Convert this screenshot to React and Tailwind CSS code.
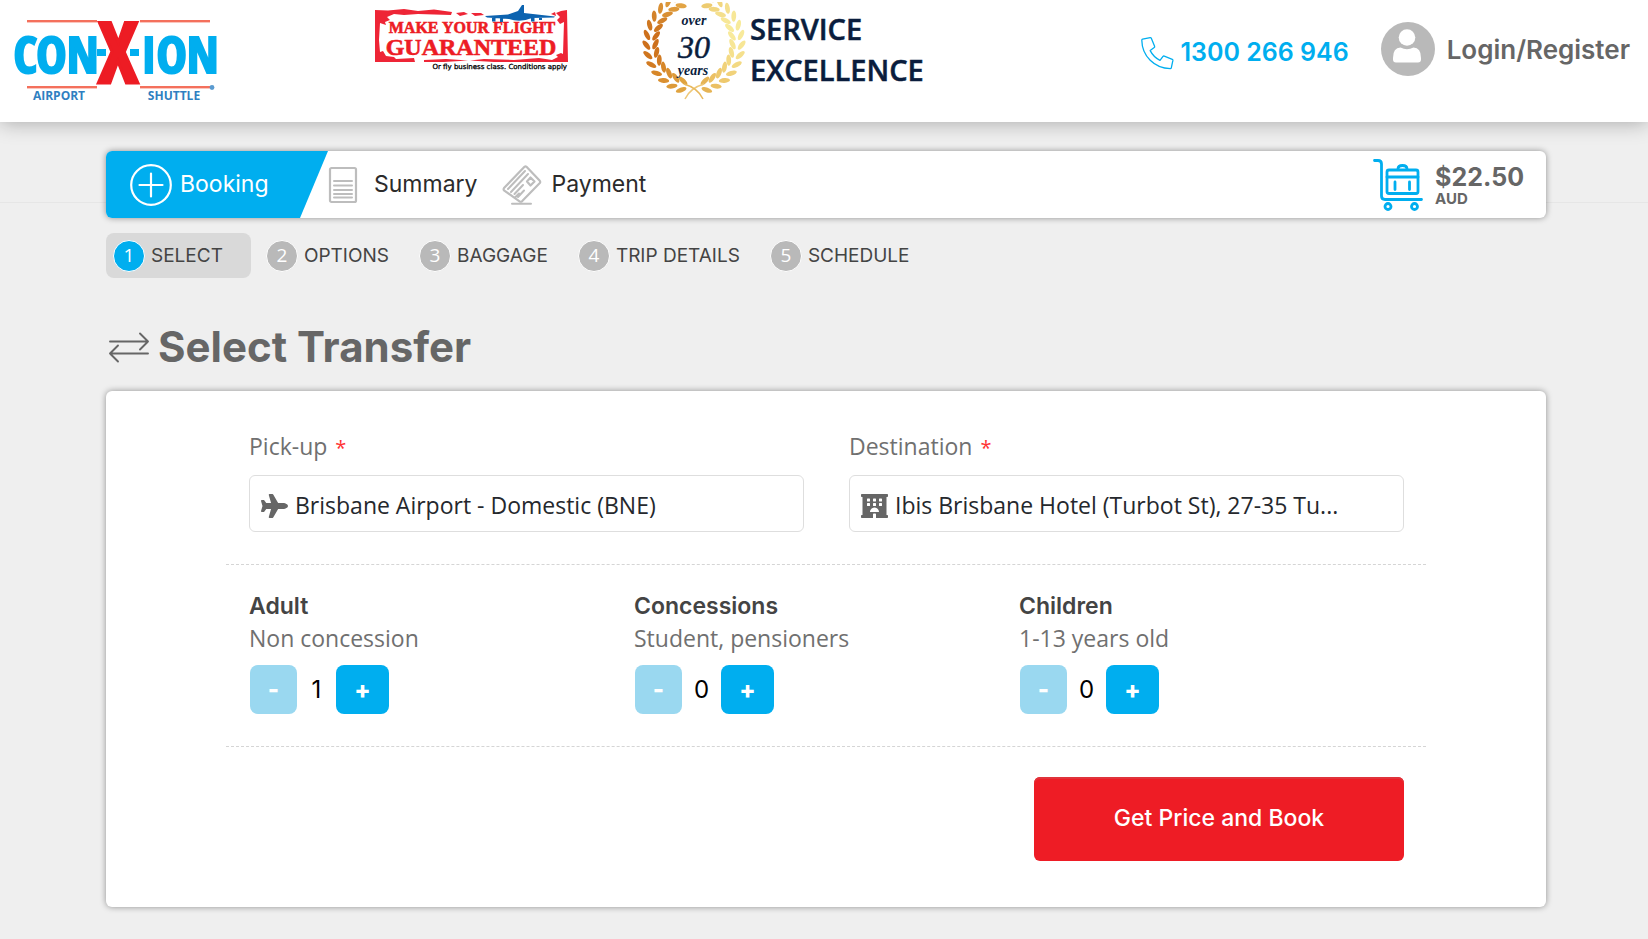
import { useState } from "react";
import { FaHotel, FaPlane } from "react-icons/fa";

const sans = "font-['Inter','Liberation_Sans',sans-serif]";
const body = "font-['Open_Sans','Noto_Sans',sans-serif]";

function ConxionLogo() {
  return (
    <svg viewBox="0 0 206 106" className="h-[106px] w-[206px] overflow-visible" role="img" aria-label="Con-X-ion Airport Shuttle">
      <g fill="#f4705c">
        <rect x="15" y="20" width="70" height="2.4" />
        <rect x="128" y="20" width="70" height="2.4" />
        <rect x="15" y="86" width="70" height="2.4" />
        <rect x="128" y="86" width="70" height="2.4" />
      </g>
      <g fill="#00aeef" stroke="#00aeef" strokeWidth="2" fontFamily="Open Sans Condensed, Liberation Sans Narrow, Liberation Sans, sans-serif" fontWeight="700" fontSize="51" textAnchor="middle">
        <text x="44" y="73">CON</text>
        <text x="168" y="73">ION</text>
      </g>
      <rect x="85" y="49" width="9" height="7" fill="#00aeef" />
      <rect x="118" y="49" width="9" height="7" fill="#00aeef" />
      <text x="106" y="83" fill="#ed1c24" stroke="#ed1c24" strokeWidth="3" fontFamily="Open Sans Condensed, Liberation Sans Narrow, Liberation Sans, sans-serif" fontWeight="700" fontSize="84" textAnchor="middle">X</text>
      <g fill="#2f7fc1" fontFamily="Open Sans, sans-serif" fontWeight="700" fontSize="12" textAnchor="middle">
        <text x="47" y="100">AIRPORT</text>
        <text x="162" y="100">SHUTTLE</text>
      </g>
      <circle cx="200" cy="87.500" r="2.400" fill="#5a9bd0" />
    </svg>
  );
}

function GuaranteeStamp() {
  return (
    <svg viewBox="0 0 200 76" className="h-[76px] w-[200px]" role="img" aria-label="Make your flight guaranteed">
      <g fill="#ee2536">
        <path d="M1 10 L14 10.500 L30 9 L44 11 L60 9.500 L78 12 L77 15 L60 14.500 L44 14 L30 15 L20 14 L13 17 L16 20 L11 22 L12 25 L6 23 L5 40 L6 52 L9 51 L12 56 L20 57 L22 59 L40 58 L41 62 L1 62Z" />
        <path d="M193 10 L194 62 L120 62 L96 60.500 L110 59 L140 60 L165 58 L178 60 L184 57 L182 55 L187 53 L189 54 L190 22 L186 24 L183 20 L186 17 L182 13 L187 11Z" />
        <path d="M50 60 L72 59 L94 60.500 L70 62 L50 62Z" />
        <path d="M82 13 l8 -1 l4 2 l-8 2z M97 13 l10 0 l3 2 l-9 1z M177 14 l4 -2 l1 4z" />
      </g>
      <g fill="#ed1c24" fontFamily="Liberation Serif, serif" fontWeight="700" textAnchor="middle" stroke="#ed1c24" strokeWidth="0.600">
        <text x="98" y="33" fontSize="16">MAKE YOUR FLIGHT</text>
        <text x="97" y="55" fontSize="24">GUARANTEED</text>
      </g>
      <path d="M111 16 L134 14.500 L144 11 L148 5 L150 5 L150 13 L181 16.500 L180 17.500 L158 18 Q146 23 135 19 L113 17.500Z M118 17h3.500v4.500h-3.500z M126 18h3v4h-3z M157 17h3.500v4.500h-3.500z M165 16h3v4h-3z" fill="#0c63b0" />
      <text x="193" y="69" textAnchor="end" fill="#000" stroke="#000" strokeWidth="0.300" fontFamily="DejaVu Sans, sans-serif" fontSize="7">Or fly business class. Conditions apply</text>
    </svg>
  );
}

const LEFT_COLOURS = ["#e0a33f", "#dd9a38", "#da9030", "#d78729", "#d27b22", "#cf751e", "#cd701c", "#cd701c", "#cf7822", "#d3822a", "#d98f33", "#dd993b", "#e2a445"];
const RIGHT_COLOURS = ["#e6b455", "#ebc064", "#eec96e", "#f1d27a", "#f3d983", "#f5e08d", "#f7e695", "#f8ea9b", "#f8eb9b", "#f7e797", "#f4df8d", "#f1d67f", "#edcb70"];

function Laurel({ side, colours }) {
  const items = colours.map((fill, i) => {
    const t = ((12 + i * 12) * Math.PI) / 180;
    const x = 52 + side * 43 * Math.sin(t);
    const y = 43 + 44 * Math.cos(t);
    const tangent = (Math.atan2(-44 * Math.sin(t), side * 43 * Math.cos(t)) * 180) / Math.PI;
    return (
      <g key={fill + i} fill={fill} transform={`translate(${x} ${y}) rotate(${tangent})`}>
        <ellipse cx="3" cy="4.600" rx="5.600" ry="2.400" transform="rotate(32 3 4.600)" />
        <ellipse cx="3" cy="-4.600" rx="5.600" ry="2.400" transform="rotate(-32 3 -4.600)" />
      </g>
    );
  });
  return <g>{items}</g>;
}

function AwardLogo() {
  return (
    <svg viewBox="0 0 290 106" className="h-[106px] w-[290px]" role="img" aria-label="Over 30 years service excellence">
      <clipPath id="award-top">
        <rect x="0" y="2" width="290" height="104" />
      </clipPath>
      <g clipPath="url(#award-top)">
        <Laurel side={-1} colours={LEFT_COLOURS} />
        <Laurel side={1} colours={RIGHT_COLOURS} />
        <path d="M62 84 Q48 88 43 99" fill="none" stroke="#eec878" strokeWidth="1.500" />
        <path d="M42 84 Q56 88 61 99" fill="none" stroke="#e8b85c" strokeWidth="1.500" />
      </g>
      <g fill="#0a1d3d" fontFamily="Liberation Serif, serif" fontStyle="italic" textAnchor="middle">
        <text x="52" y="25" fontSize="14" fontWeight="700">over</text>
        <text x="52" y="58" fontSize="32" stroke="#0a1d3d" strokeWidth="0.500">30</text>
        <text x="51" y="75" fontSize="14" fontWeight="700">years</text>
      </g>
      <g fill="#0a1d3d" stroke="#0a1d3d" strokeWidth="0.500" fontFamily="Open Sans, sans-serif" fontWeight="600" fontSize="29">
        <text x="108" y="40">SERVICE</text>
        <text x="108" y="81">EXCELLENCE</text>
      </g>
    </svg>
  );
}

function PhoneIcon() {
  return (
    <svg viewBox="0 0 34 34" className="size-[34px]" fill="none" stroke="#00aeef" strokeWidth="1.300" strokeLinejoin="round" aria-hidden="true">
      <path d="M2.600 3.200 L10.200 1.600 Q11 1.500 11.300 2.200 L14.600 10.200 Q14.900 11 14.200 11.600 L10.200 14.600 Q13.500 21 20 24.400 L23 20.400 Q23.500 19.800 24.300 20.100 L32.300 23.300 Q33 23.700 32.900 24.400 L31.300 31.800 Q31.100 32.600 30.300 32.600 C14.500 32.400 2 20 1.800 4.200 Q1.800 3.400 2.600 3.200Z" />
    </svg>
  );
}

function AvatarIcon() {
  return (
    <svg viewBox="0 0 54 54" className="size-[54px]" aria-hidden="true">
      <circle cx="27" cy="27" r="27" fill="#b9b9b9" />
      <circle cx="26" cy="15.500" r="8.300" fill="#fff" />
      <path d="M12 36 Q12 25.500 19.500 25.500 Q26 29 32.500 25.500 Q40 25.500 40 36 V37.500 Q40 40.500 37 40.500 H15 Q12 40.500 12 37.500Z" fill="#fff" />
    </svg>
  );
}

function PlusCircleIcon() {
  return (
    <svg viewBox="0 0 42 42" className="size-[42px]" fill="none" stroke="#fff" strokeWidth="2.200" strokeLinecap="round" aria-hidden="true">
      <circle cx="21" cy="21" r="19.800" />
      <path d="M21 9.500V32.500M9.500 21H32.500" />
    </svg>
  );
}

function SummaryIcon() {
  return (
    <svg viewBox="0 0 30 38" className="h-[38px] w-[30px]" fill="none" stroke="#bdbdbd" strokeWidth="2.200" strokeLinecap="round" aria-hidden="true">
      <rect x="2" y="2" width="26" height="34" rx="1.500" />
      <path d="M6 15H24M6 19.500H24M6 24H24M6 28H24M6 31.500H24" strokeWidth="2" />
    </svg>
  );
}

function PaymentIcon() {
  return (
    <svg viewBox="0 0 40 40" className="size-10" fill="none" stroke="#bdbdbd" strokeWidth="2.200" strokeLinecap="round" strokeLinejoin="round" aria-hidden="true">
      <path d="M24.500 1.800 L37.800 15.800 Q38.600 17 37.800 18 L20 36.300 Q18.700 37.200 17.500 36.300 L2 25.300 Q1.200 24.200 2 23 L22.500 1.800 Q23.500 1 24.500 1.800Z" />
      <path d="M10 38.800H29M6 24L23 6M9 27L26 9M12.500 29L21 20M16 32L22 25.500M13 32.500L17 28.500" strokeWidth="2" />
      <path d="M28.500 12.500L32.500 16.500L28.500 20.500L25 16.500Z" />
    </svg>
  );
}

function CartIcon() {
  return (
    <svg viewBox="0 0 50 54" className="h-[54px] w-[50px]" fill="none" stroke="#00aeef" strokeWidth="2.800" strokeLinecap="round" strokeLinejoin="round" aria-hidden="true">
      <path d="M1.500 2.500H5Q8.500 2.500 8.500 6V38Q8.500 41.500 12 41.500H48.500" />
      <rect x="14" y="12" width="31" height="23.500" rx="2" />
      <path d="M14 19H45M22 24V31.500M36.500 24V31.500M25 11Q25 7.500 29.500 7.500Q34 7.500 34 11" />
      <circle cx="15" cy="48.500" r="3" />
      <circle cx="41.500" cy="48.500" r="3" />
    </svg>
  );
}

function TransferIcon() {
  return (
    <svg viewBox="0 0 42 32" className="h-8 w-[42px]" fill="none" stroke="#666" strokeWidth="1.900" strokeLinecap="round" strokeLinejoin="round" aria-hidden="true">
      <path d="M2 10.500H40M32 2.500L40 10.500L32 18.500M40 22.500H2M10 14.500L2 22.500L10 30.500" />
    </svg>
  );
}

const STEPS = ["SELECT", "OPTIONS", "BAGGAGE", "TRIP DETAILS", "SCHEDULE"];

function Steps() {
  return (
    <ol className="mt-[15px] flex items-center">
      {STEPS.map((name, i) => (
        <li key={name}>
          <a
            href="#step"
            className={`flex h-[45px] items-center gap-1.5 rounded-lg pl-[7px] text-[19px] text-[#444] ${i === 0 ? "mr-2 bg-[#d9d9d9] pr-7" : "pr-[23px]"}`}
          >
            <span className={`flex size-8 items-center justify-center rounded-full border border-white text-white ${body} ${i === 0 ? "bg-[#00aeef]" : "bg-[#b9b9b9]"}`}>
              {i + 1}
            </span>
            <span className="pt-0.5">{name}</span>
          </a>
        </li>
      ))}
    </ol>
  );
}

function Field({ id, label, icon, value }) {
  return (
    <div className={`flex-1 ${body}`}>
      <label htmlFor={id} className="block text-[23px] leading-8 text-[#707070]">
        {label} <span className="ml-0.5 text-xl text-[#f33]">*</span>
      </label>
      <div className="mt-[13px] flex h-[57px] items-center gap-[7px] rounded-md border border-[#dedede] px-[11px] pt-1 text-[#666]">
        {icon}
        <input id={id} defaultValue={value} className="min-w-0 flex-1 bg-transparent text-[23px] text-[#25282d] outline-none" />
      </div>
    </div>
  );
}

function Counter({ title, note, initial }) {
  const [count, setCount] = useState(initial);
  return (
    <div className="flex-1">
      <h2 className="text-[23px] leading-8 font-semibold text-[#444]">{title}</h2>
      <p className={`text-[23px] leading-8 text-[#707070] ${body}`}>{note}</p>
      <div className="mt-[11px] flex items-center pl-px">
        <button type="button" aria-label={`Fewer ${title}`} onClick={() => setCount(Math.max(initial, count - 1))} className="h-[49px] w-[47px] rounded-lg bg-[#9ad8f0] text-2xl font-extrabold text-white">
          -
        </button>
        <output className="w-[39px] text-center text-2xl text-black">{count}</output>
        <button type="button" aria-label={`More ${title}`} onClick={() => setCount(count + 1)} className="h-[49px] w-[53px] rounded-lg bg-[#00aeef] text-2xl font-extrabold text-white">
          +
        </button>
      </div>
    </div>
  );
}

export default function App() {
  return (
    <div className={`flex min-h-screen flex-col bg-[#efefef] ${sans}`}>
      <header className="relative flex min-h-[122px] items-start bg-white pr-[18px] pl-3 shadow-[0_0_20px_rgba(0,0,0,0.32)]">
        <a href="#home"><ConxionLogo /></a>
        <div className="ml-[156px]"><GuaranteeStamp /></div>
        <div className="ml-[68px]"><AwardLogo /></div>
        <div className="ml-auto flex items-start gap-8 pt-[22px]">
          <a href="tel:1300266946" className="flex items-center gap-1.5 pt-3 text-[25px] font-semibold whitespace-nowrap text-[#00aeef]">
            <PhoneIcon />
            1300 266 946
          </a>
          <a href="#login" className="flex items-center gap-3 text-[26px] font-semibold whitespace-nowrap text-[#666]">
            <AvatarIcon />
            Login/Register
          </a>
        </div>
      </header>

      <main className="flex-1 bg-[linear-gradient(#e6e6e6,#e6e6e6)] bg-[length:100%_1px] bg-[position:0_80px] bg-no-repeat pt-[29px] pr-[102px] pb-6 pl-[106px]">
        <nav className="flex h-[67px] items-center rounded-md bg-white pr-[22px] text-[23px] text-[#2b2b2b] shadow-[0_0_6px_rgba(0,0,0,0.4)]">
          <a href="#booking" className="flex h-full w-[222px] items-center gap-2 rounded-l-md bg-[#00aeef] pl-6 text-white [clip-path:polygon(0_0,100%_0,194px_100%,0_100%)]">
            <PlusCircleIcon />
            Booking
          </a>
          <a href="#summary" className="flex items-center gap-4">
            <SummaryIcon />
            Summary
          </a>
          <a href="#payment" className="ml-6 flex items-center gap-2.5">
            <PaymentIcon />
            Payment
          </a>
          <div className="ml-auto flex items-center gap-3">
            <CartIcon />
            <div className="font-bold text-[#666]">
              <div className="text-[25px] leading-7">$22.50</div>
              <div className="text-[15px] leading-4">AUD</div>
            </div>
          </div>
        </nav>

        <Steps />

        <h1 className="mt-[41px] flex items-center gap-2 pl-[2px] text-[42px] leading-[56px] font-bold text-[#666]">
          <TransferIcon />
          Select Transfer
        </h1>

        <form className="mt-4 rounded-md bg-white px-[120px] pt-[39px] pb-[46px] shadow-[0_0_6px_rgba(0,0,0,0.4)]" onSubmit={(e) => e.preventDefault()}>
          <div className="flex gap-[45px] pr-[22px] pb-8 pl-[23px]">
            <Field id="pickup" label="Pick-up" icon={<FaPlane className="h-6 w-[27px]" />} value="Brisbane Airport - Domestic (BNE)" />
            <Field id="destination" label="Destination" icon={<FaHotel className="h-6 w-[27px]" />} value="Ibis Brisbane Hotel (Turbot St), 27-35 Tu..." />
          </div>
          <div className="flex border-y border-dashed border-[#d5d5d5] pt-[25px] pr-[22px] pb-8 pl-[23px]">
            <Counter title="Adult" note="Non concession" initial={1} />
            <Counter title="Concessions" note="Student, pensioners" initial={0} />
            <Counter title="Children" note="1-13 years old" initial={0} />
          </div>
          <div className="flex justify-end pt-[30px] pr-[22px]">
            <button type="submit" className="h-[84px] w-[370px] rounded-md bg-[#ee1c25] pb-0.5 text-[23px] font-medium text-white shadow-[inset_0_2px_0_#e0333b]">
              Get Price and Book
            </button>
          </div>
        </form>
      </main>
    </div>
  );
}
